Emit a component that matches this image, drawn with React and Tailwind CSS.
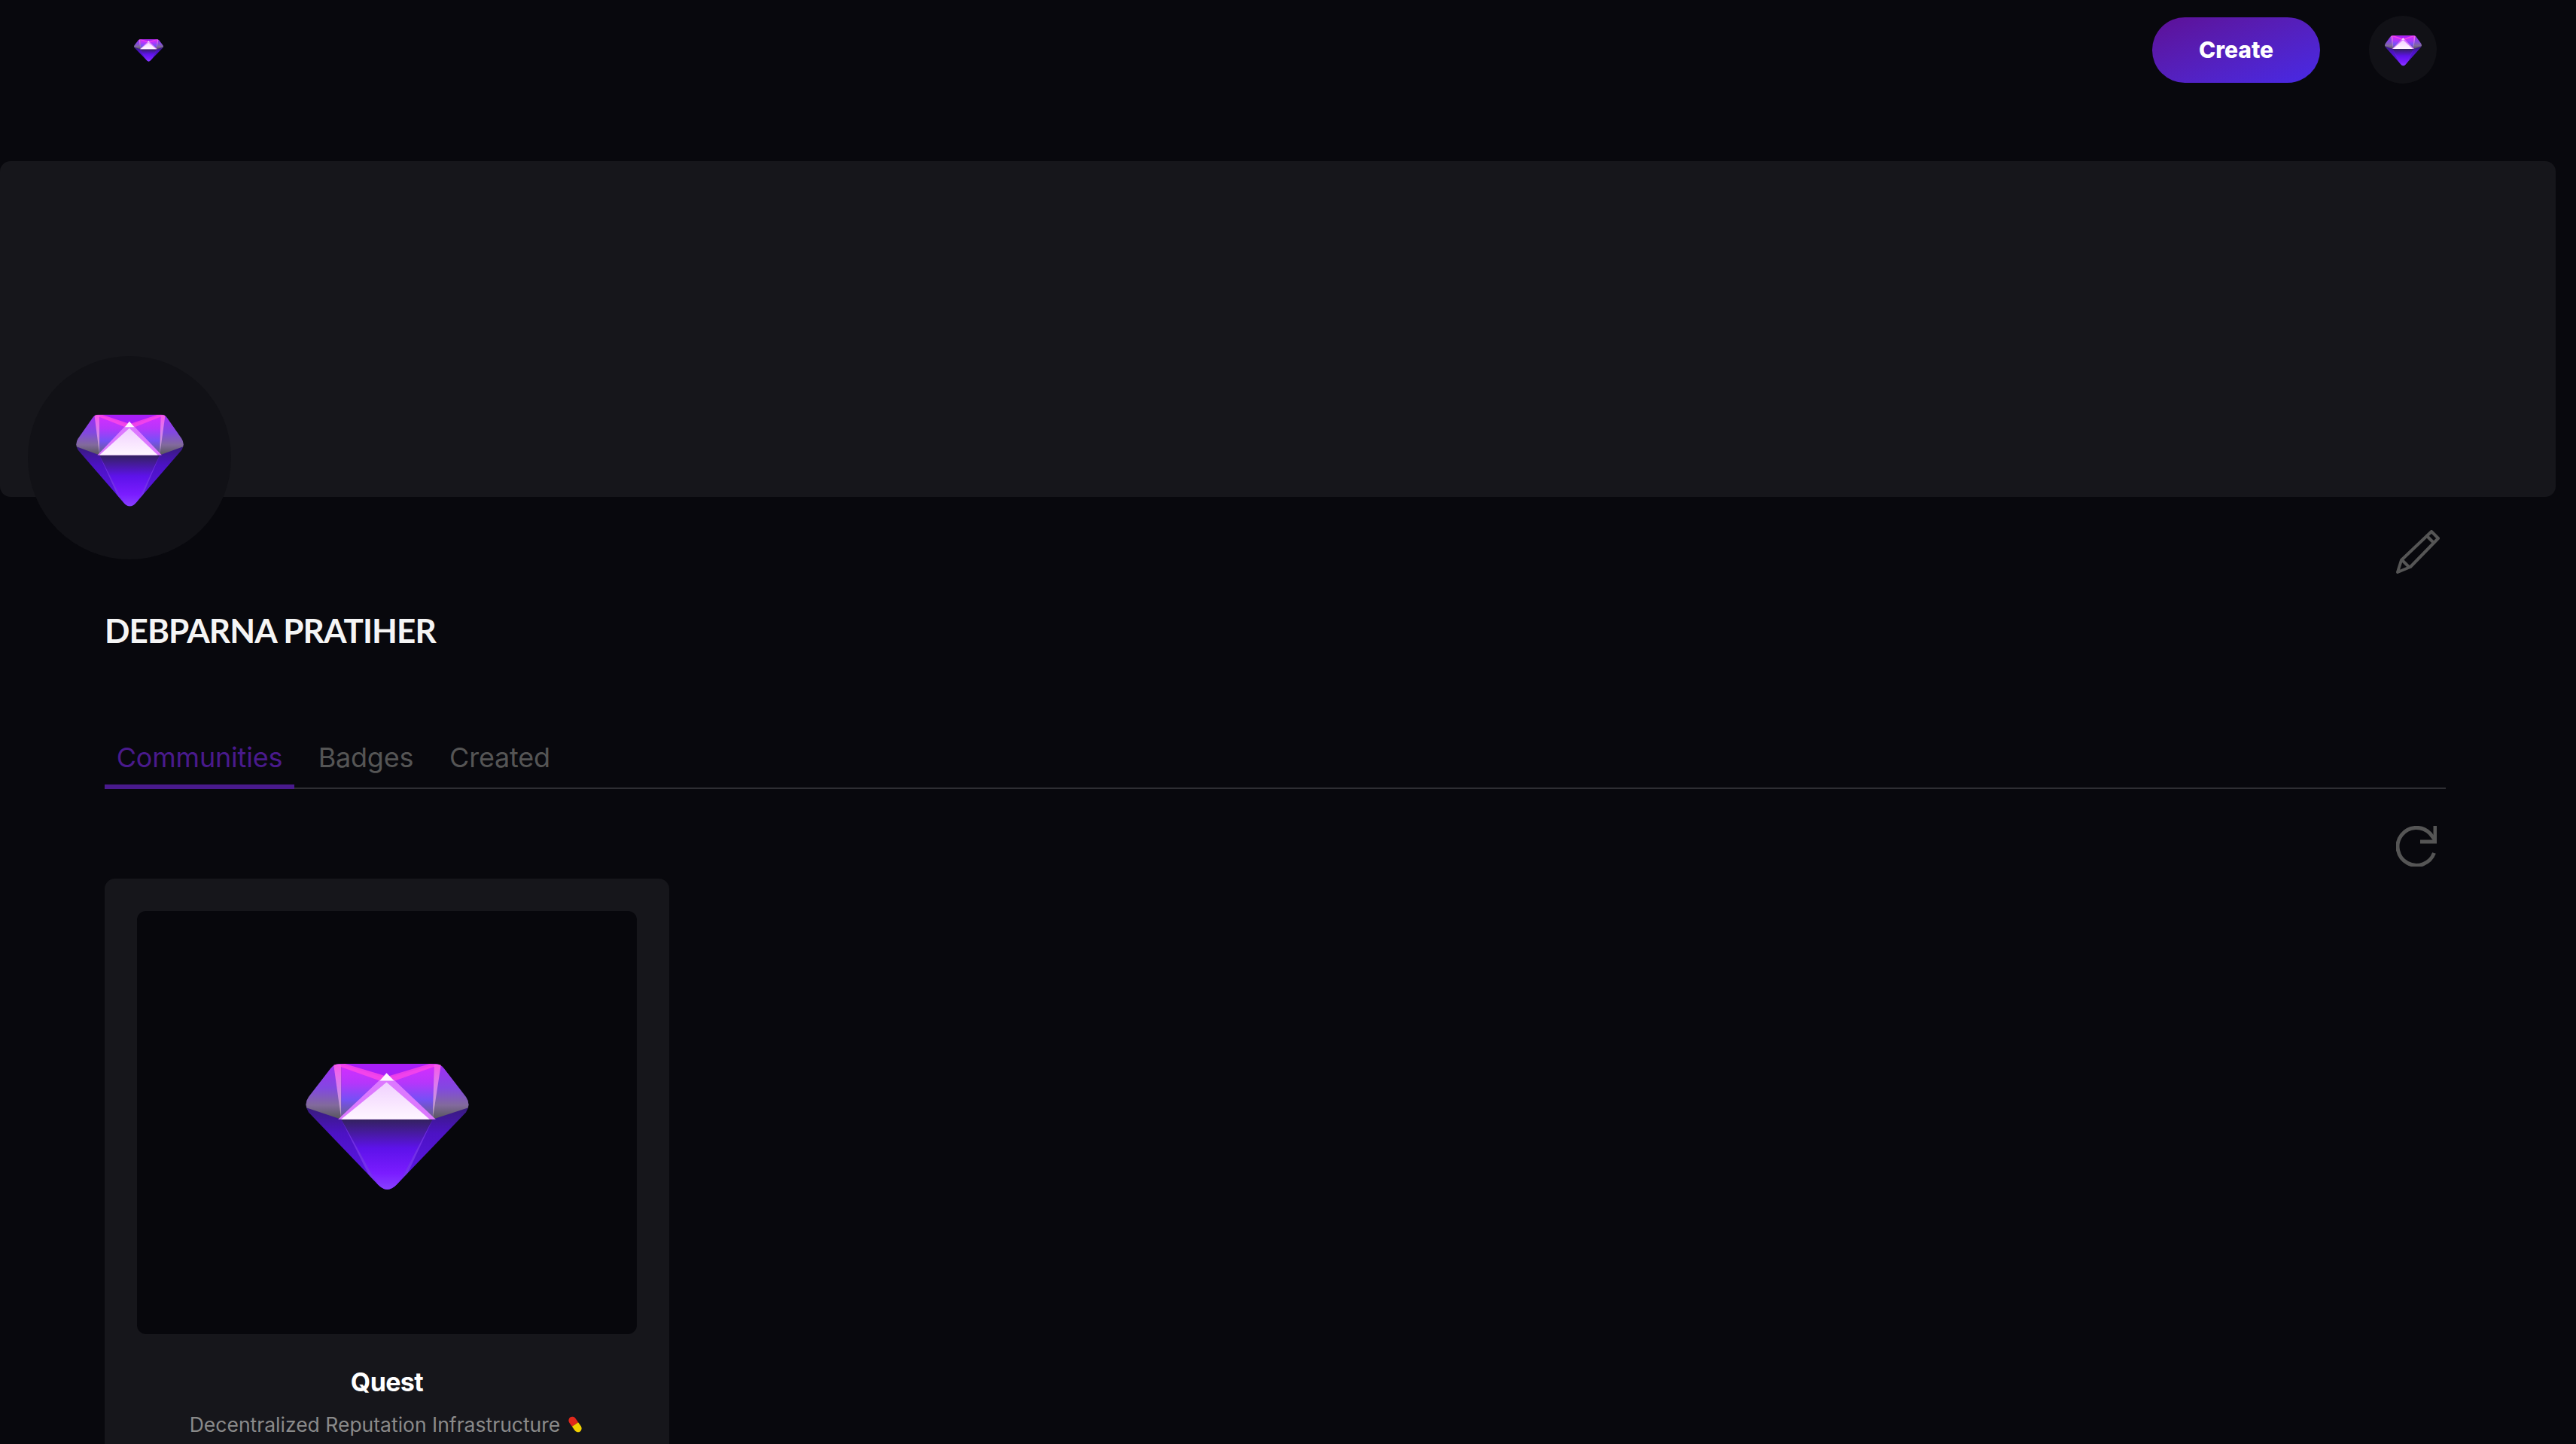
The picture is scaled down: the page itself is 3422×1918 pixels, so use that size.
import React from "react";

// Faceted purple gem, stretched to whatever box it is given
const Gem = ({ id, className }) => (
  <svg viewBox="0 0 216 166" preserveAspectRatio="none" className={className}>
    <defs>
      <clipPath id={id + "-clip"}>
        <path d="M44 1 L172 1 Q178 1 183 7 L212 44 Q219 54 212 64 L120 158 Q108 170 96 158 L4 64 Q-3 54 4 44 L33 7 Q38 1 44 1 Z" />
      </clipPath>
      <linearGradient id={id + "-side"} x1="0" y1="0" x2="0" y2="1">
        <stop offset="0" stopColor="#a22cf5" />
        <stop offset="0.45" stopColor="#8248e0" />
        <stop offset="0.75" stopColor="#826a9c" />
        <stop offset="1" stopColor="#55545a" />
      </linearGradient>
      <linearGradient id={id + "-mid"} x1="0" y1="0" x2="0" y2="1">
        <stop offset="0" stopColor="#d82cff" />
        <stop offset="0.35" stopColor="#b636fb" />
        <stop offset="0.65" stopColor="#7650f5" />
        <stop offset="1" stopColor="#6a6078" />
      </linearGradient>
      <linearGradient id={id + "-low"} x1="0" y1="0" x2="0" y2="1">
        <stop offset="0" stopColor="#3a3a3e" />
        <stop offset="0.25" stopColor="#2e2058" />
        <stop offset="0.55" stopColor="#4c12c4" />
        <stop offset="1" stopColor="#6018f0" />
      </linearGradient>
      <linearGradient id={id + "-center"} x1="0" y1="0" x2="0" y2="1">
        <stop offset="0" stopColor="#33225e" />
        <stop offset="0.4" stopColor="#5d12ea" />
        <stop offset="0.75" stopColor="#7a1cff" />
        <stop offset="1" stopColor="#8a44ff" />
      </linearGradient>
      <linearGradient id={id + "-table"} x1="0" y1="0" x2="0" y2="1">
        <stop offset="0" stopColor="#f0d0ff" />
        <stop offset="1" stopColor="#fff6ff" />
      </linearGradient>
      <linearGradient id={id + "-ray"} x1="0" y1="0" x2="0" y2="1">
        <stop offset="0" stopColor="#ff5ce8" stopOpacity="0.9" />
        <stop offset="1" stopColor="#f4e4ff" stopOpacity="0.45" />
      </linearGradient>
    </defs>
    <g clipPath={"url(#" + id + "-clip)"}>
      <rect x="-2" y="0" width="220" height="166" fill={"url(#" + id + "-low)"} />
      <polygon points="47,73 168,73 118,166 100,166" fill={"url(#" + id + "-center)"} />
      <polygon points="47,73 100,166 94,166" fill="#9a50ff" opacity="0.45" />
      <polygon points="168,73 118,166 124,166" fill="#9a50ff" opacity="0.45" />
      <polygon points="-2,0 47,0 47,73 -2,57" fill={"url(#" + id + "-side)"} />
      <polygon points="218,0 168,0 168,73 218,57" fill={"url(#" + id + "-side)"} />
      <polygon points="47,0 170,0 168,73 47,73" fill={"url(#" + id + "-mid)"} />
      <polygon points="40,0 178,0 107,20" fill="#a81ff8" />
      <polygon points="38,2 52,1 110,18 98,23" fill="#ff48e6" opacity="0.8" />
      <polygon points="178,2 164,1 106,18 118,23" fill="#ff48e6" opacity="0.75" />
      <polygon points="37,2 47,2 47,72" fill={"url(#" + id + "-ray)"} />
      <polygon points="170,2 179,2 168,72" fill={"url(#" + id + "-ray)"} />
      <polygon points="98,22 117,22 172,73 43,73" fill="#dc78ff" />
      <polygon points="107,25 164,73 47,73" fill={"url(#" + id + "-table)"} />
      <polygon points="107,13 117,23 98,23" fill="#fff2ff" />
    </g>
  </svg>
);

const Pencil = () => (
  <svg viewBox="0 0 58 58" className="h-[58px] w-[58px]" fill="none" stroke="#555" strokeWidth="4" strokeLinejoin="round" strokeLinecap="round">
    <path d="M47 2 L56 11 L19 49 L2 56 L7 40 Z" />
    <path d="M41 8 L50 17" />
    <path d="M8 40 L17 49" />
  </svg>
);

const Refresh = () => (
  <svg viewBox="0 0 54 54" className="h-[54px] w-[54px]" fill="none" stroke="#555" strokeWidth="5">
    <path d="M50.5 36 A25 25 0 1 1 45 10 L52 19" />
    <path d="M52 0 V21 H32" />
  </svg>
);

const PillEmoji = () => (
  <svg viewBox="0 0 24 24" className="ml-[8px] h-[24px] w-[24px] shrink-0">
    <g transform="rotate(-35 12 12)">
      <path d="M7 12 V6 A5 5.5 0 0 1 17 6 V12 Z" fill="#e0281c" />
      <path d="M7 12 V18 A5 5.5 0 0 0 17 18 V12 Z" fill="#f2d000" />
    </g>
  </svg>
);

export default function App() {
  return (
    <div className="h-screen overflow-hidden bg-[#08080d] font-['Inter',sans-serif]">
      {/* Navbar */}
      <div className="flex h-[214px] items-start justify-between pl-[178px] pr-[185px]">
        <Gem id="gem-nav" className="mt-[52px] h-[30px] w-[39px]" />
        <div className="mt-[21px] flex items-center gap-[65px]">
          <button className="h-[87px] w-[223px] rounded-full bg-gradient-to-br from-[#5d0f96] to-[#4729e6] text-[30px] font-extrabold text-white">
            Create
          </button>
          <div className="flex h-[90px] w-[90px] items-center justify-center rounded-full bg-[#111116]">
            <Gem id="gem-user" className="mt-[3px] h-[41px] w-[49px]" />
          </div>
        </div>
      </div>

      {/* Banner + avatar */}
      <div className="relative mr-[27px] h-[446px] rounded-[14px] bg-[#16161b]">
        <div className="absolute left-[37px] top-[259px] flex h-[270px] w-[270px] items-center justify-center rounded-full bg-[#111116]">
          <Gem id="gem-avatar" className="mt-[8px] h-[124px] w-[143px]" />
        </div>
      </div>

      <div className="ml-[139px] w-[3110px]">
        <div className="mt-[44px] flex justify-end pr-[8px]">
          <Pencil />
        </div>

        <h1 className="mt-[45px] font-['Lato',sans-serif] text-[44px] font-bold leading-[60px] tracking-[-0.9px] text-[#f5f5f5]">
          DEBPARNA PRATIHER
        </h1>

        {/* Tabs */}
        <div className="mt-[108px] flex h-[73px] gap-[16px] border-b-2 border-[#2e2e33]">
          <div className="flex h-[73px] w-[252px] items-center justify-center border-b-[6px] border-[#491a8c] pb-[5px] text-[36px] tracking-[-0.2px] text-[#491a8c]">
            Communities
          </div>
          <div className="flex h-[73px] w-[158px] items-center justify-center pb-[11px] text-[36px] tracking-[-0.2px] text-[#555]">
            Badges
          </div>
          <div className="flex h-[73px] w-[166px] items-center justify-center pb-[11px] text-[36px] tracking-[-0.2px] text-[#555]">
            Created
          </div>
        </div>

        <div className="mt-[49px] flex justify-end pr-[12px]">
          <Refresh />
        </div>

        {/* Community card */}
        <div className="mt-[16px] h-[800px] w-[750px] rounded-[14px] bg-[#16161b] px-[43px] pt-[43px]">
          <div className="flex h-[562px] items-center justify-center rounded-[12px] bg-[#07070c]">
            <Gem id="gem-card" className="mt-[12px] h-[170px] w-[217px]" />
          </div>
          <p className="mt-[44px] text-center text-[34px] font-bold leading-[40px] tracking-[-0.6px] text-white">Quest</p>
          <div className="mt-[19px] flex items-center justify-center text-[26.5px] leading-[34px] text-[#8a8a8a]">
            Decentralized Reputation Infrastructure
            <PillEmoji />
          </div>
        </div>
      </div>
    </div>
  );
}
